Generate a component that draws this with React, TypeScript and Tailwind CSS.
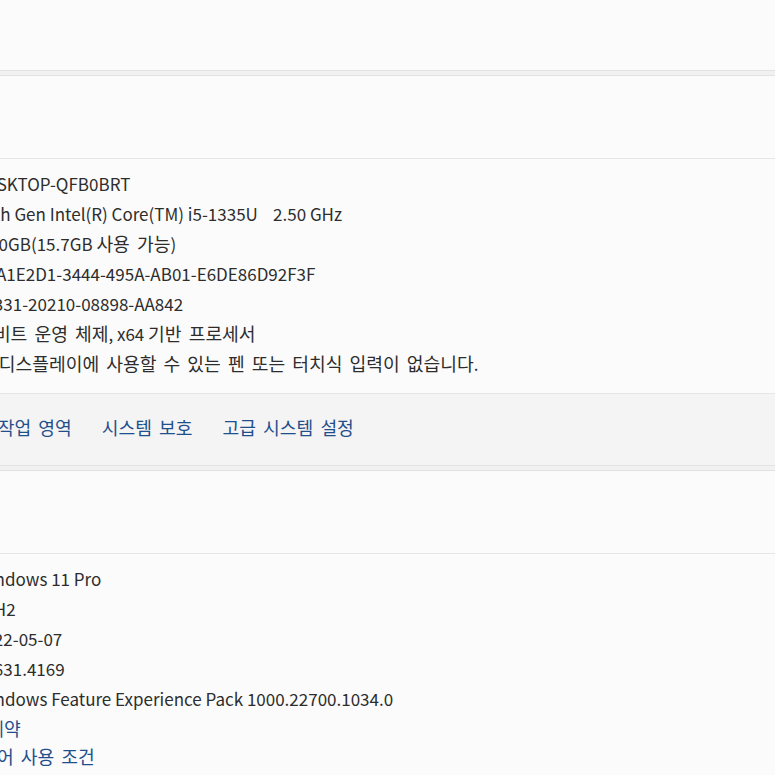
import React from "react";

const HANGUL_RUN = /([\uAC00-\uD7A3\u3131-\u318E]+(?:\s+[\uAC00-\uD7A3\u3131-\u318E]+)*)/;

function K({ t }: { t: string }) {
  const parts = t.split(HANGUL_RUN);
  return (
    <>
      {parts.map((p, i) =>
        i % 2 === 1 ? (
          <span key={i} className="text-[18.2px] [word-spacing:3px]">
            {p}
          </span>
        ) : (
          <React.Fragment key={i}>{p}</React.Fragment>
        )
      )}
    </>
  );
}

const specRows: [string, string][] = [
  ["디바이스 이름", "DESKTOP-QFB0BRT"],
  ["프로세서", "13th Gen Intel(R) Core(TM) i5-1335U\u00a0\u00a0\u00a0\u00a02.50 GHz"],
  ["설치된 RAM", "16.0GB(15.7GB 사용 가능)"],
  ["장치 ID", "3DA1E2D1-3444-495A-AB01-E6DE86D92F3F"],
  ["제품 ID", "00331-20210-08898-AA842"],
  ["시스템 종류", "64비트 운영 체제, x64 기반 프로세서"],
  ["펜 및 터치", "이 디스플레이에 사용할 수 있는 펜 또는 터치식 입력이 없습니다."],
];

const winRows: [string, string][] = [
  ["에디션", "Windows 11 Pro"],
  ["버전", "23H2"],
  ["설치 날짜", "2022-05-07"],
  ["OS 빌드", "22631.4169"],
  ["경험", "Windows Feature Experience Pack 1000.22700.1034.0"],
];

function Row({ label, value }: { label: string; value: string }) {
  return (
    <div className="flex h-[30px] items-center whitespace-nowrap">
      <div className="w-[125px] shrink-0 overflow-hidden">
        <K t={label} />
      </div>
      <div>
        <K t={value} />
      </div>
    </div>
  );
}

export default function App() {
  return (
    <div
      className="w-[775px] h-[775px] overflow-hidden bg-[#f1f1f1] text-[17px] text-[#2d2d2d]"
      style={{ fontFamily: '"Noto Sans CJK KR", "Noto Sans", sans-serif' }}
    >
      <div className="ml-[-200px] w-[1000px] flex flex-col">
        {/* Card 1 (cut off at top) */}
        <div className="h-[71px] bg-[#fbfbfb] border-b border-[#e2e2e2]" />
        <div className="h-[4px]" />
        {/* Card 2: device specifications */}
        <div className="bg-[#fbfbfb] border-t border-b border-[#e2e2e2] flex flex-col">
          <div className="h-[82px] flex items-center pl-[50px] whitespace-nowrap">
            <span className="font-semibold">
              <K t="디바이스 사양" />
            </span>
          </div>
          <div className="h-px bg-[#e6e6e6]" />
          <div className="pt-[10px] pb-[14px] pl-[50px] flex flex-col">
            {specRows.map(([l, v]) => (
              <Row key={l} label={l} value={v} />
            ))}
          </div>
          <div className="h-px bg-[#e6e6e6]" />
          <div className="h-[71px] pb-[3px] bg-[#f4f4f4] flex items-center whitespace-nowrap text-[#1f4f8c]">
            <div className="flex gap-[30px] ml-[100px]">
              <span>
                <K t="도메인 또는 작업 영역" />
              </span>
              <span>
                <K t="시스템 보호" />
              </span>
              <span>
                <K t="고급 시스템 설정" />
              </span>
            </div>
          </div>
        </div>
        <div className="h-[4px]" />
        {/* Card 3: Windows specifications */}
        <div className="bg-[#fbfbfb] border-t border-[#e2e2e2] flex flex-col">
          <div className="h-[82px] flex items-center pl-[50px] whitespace-nowrap">
            <span className="font-semibold">
              <K t="Windows 사양" />
            </span>
          </div>
          <div className="h-px bg-[#e6e6e6]" />
          <div className="pt-[10px] pb-[20px] pl-[50px] flex flex-col">
            {winRows.map(([l, v]) => (
              <Row key={l} label={l} value={v} />
            ))}
            <div className="h-[29px] pl-[6px] flex items-center whitespace-nowrap text-[#1f4f8c]">
              <K t="Microsoft 서비스 계약" />
            </div>
            <div className="h-[27px] pl-[6px] flex items-center whitespace-nowrap text-[#1f4f8c]">
              <K t="Microsoft 소프트웨어 사용 조건" />
            </div>
          </div>
        </div>
      </div>
    </div>
  );
}
